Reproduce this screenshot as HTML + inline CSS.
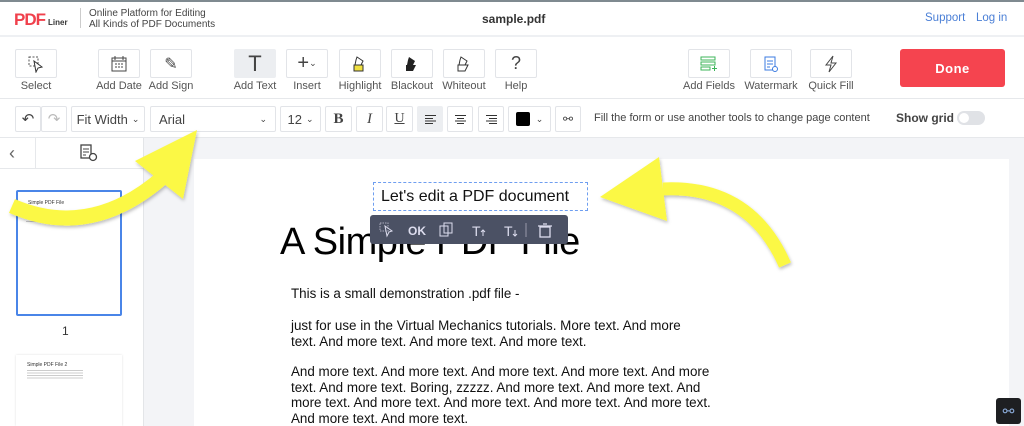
<!DOCTYPE html>
<html><head><meta charset="utf-8"><style>
*{margin:0;padding:0;box-sizing:border-box}
body{width:1024px;height:426px;overflow:hidden;background:#fff;font-family:"Liberation Sans",sans-serif;position:relative;color:#333}
.a{position:absolute}
.btn{position:absolute;border:1px solid #e2e4e8;border-radius:2px;background:#fff;height:29px;top:49px;width:42px;display:flex;align-items:center;justify-content:center}
.lbl{position:absolute;top:80px;font-size:11px;color:#555;text-align:center;width:70px}
.fb{position:absolute;top:106px;height:26px;border:1px solid #e2e4e8;border-radius:2px;background:#fff;display:flex;align-items:center;justify-content:center;font-size:13px;color:#444}
.body{font-family:"Liberation Sans",sans-serif;font-size:13.4px;color:#111;line-height:15.5px}
</style></head><body>
<div class="a" style="left:0;top:0;width:1024px;height:2px;background:#7f8a90"></div>
<div class="a" style="left:14px;top:10px;font-weight:bold;font-size:17px;color:#f0404c;letter-spacing:-1px">PDF<span style="font-size:8px;color:#333;letter-spacing:0;margin-left:3px">Liner</span></div>
<div class="a" style="left:80px;top:8px;width:1px;height:20px;background:#ccc"></div>
<div class="a" style="left:89px;top:8px;font-size:10px;line-height:11px;color:#444">Online Platform for Editing<br>All Kinds of PDF Documents</div>
<div class="a" style="left:482px;top:12px;font-size:12px;font-weight:bold;color:#333">sample.pdf</div>
<div class="a" style="left:925px;top:12px;font-size:11.5px;color:#4a7fd6">Support</div>
<div class="a" style="left:976px;top:12px;font-size:11.5px;color:#4a7fd6">Log in</div>
<div class="a" style="left:0;top:35px;width:1024px;height:2px;background:#eef0f3"></div>
<div class="btn" style="left:15px"><svg width="18" height="18" viewBox="0 0 18 18"><rect x="2" y="2" width="9" height="9" fill="none" stroke="#555" stroke-dasharray="2 1.5"/><path d="M7 6l8 6-4 1-2 4z" fill="#fff" stroke="#333"/></svg></div>
<div class="lbl" style="left:1px">Select</div>
<div class="btn" style="left:98px"><svg width="16" height="16"><rect x="1" y="2" width="14" height="13" fill="none" stroke="#444"/><path d="M1 5h14M4 0v4M12 0v4" stroke="#444"/><path d="M4 8h2M7 8h2M10 8h2M4 11h2M7 11h2M10 11h2" stroke="#444"/></svg></div>
<div class="lbl" style="left:84px">Add Date</div>
<div class="btn" style="left:150px;font-size:16px;color:#444">✎</div>
<div class="lbl" style="left:136px">Add Sign</div>
<div class="btn" style="left:234px;background:#eceef1;border-color:#eceef1;font-size:22px;color:#444">T</div>
<div class="lbl" style="left:220px">Add Text</div>
<div class="btn" style="left:286px;font-size:20px;color:#444">+<span style="font-size:9px">⌄</span></div>
<div class="lbl" style="left:272px">Insert</div>
<div class="btn" style="left:339px"><svg width="14" height="16"><path d="M4 1l6 4-2 4H2l1-5z" fill="#fff" stroke="#333"/><rect x="1" y="9" width="9" height="6" fill="#f0e040" stroke="#333"/></svg></div>
<div class="lbl" style="left:325px">Highlight</div>
<div class="btn" style="left:391px"><svg width="14" height="16"><path d="M4 1l6 4-2 4H2l1-5z" fill="#222"/><path d="M1 9h10l-3 6H1z" fill="#222"/></svg></div>
<div class="lbl" style="left:377px">Blackout</div>
<div class="btn" style="left:443px"><svg width="14" height="16"><path d="M4 1l6 4-2 4H2l1-5z" fill="#fff" stroke="#333"/><path d="M1 9h10l-3 6H1z" fill="#fff" stroke="#333"/></svg></div>
<div class="lbl" style="left:429px">Whiteout</div>
<div class="btn" style="left:495px;font-size:18px;color:#444">?</div>
<div class="lbl" style="left:481px">Help</div>
<div class="btn" style="left:688px"><svg width="18" height="16"><rect x="1" y="1" width="14" height="3" fill="none" stroke="#3cb55a"/><rect x="1" y="6" width="14" height="3" fill="none" stroke="#3cb55a"/><rect x="1" y="11" width="9" height="3" fill="none" stroke="#3cb55a"/><path d="M12 12.5h5M14.5 10v5" stroke="#3cb55a"/></svg></div>
<div class="lbl" style="left:674px">Add Fields</div>
<div class="btn" style="left:750px"><svg width="16" height="16"><rect x="2" y="1" width="10" height="13" fill="none" stroke="#3b7be0"/><path d="M4 5h6M4 8h6M4 11h3" stroke="#3b7be0"/><circle cx="12" cy="13" r="2.5" fill="#fff" stroke="#3b7be0"/></svg></div>
<div class="lbl" style="left:736px">Watermark</div>
<div class="btn" style="left:810px"><svg width="14" height="18"><path d="M9 1L2 10h5l-2 7 7-9H7z" fill="none" stroke="#444"/></svg></div>
<div class="lbl" style="left:796px">Quick Fill</div>
<div class="a" style="left:900px;top:49px;width:105px;height:38px;background:#f5444f;border-radius:3px;color:#fff;font-weight:bold;font-size:13px;display:flex;align-items:center;justify-content:center;letter-spacing:.5px">Done</div>
<div class="a" style="left:0;top:98px;width:1024px;height:1px;background:#e6e8eb"></div>
<div class="fb" style="left:15px;width:26px;font-size:15px">↶</div>
<div class="fb" style="left:41px;width:26px;font-size:15px;color:#bbb">↷</div>
<div class="fb" style="left:71px;width:74px">Fit Width <span style="font-size:9px;margin-left:4px">⌄</span></div>
<div class="fb" style="left:150px;width:126px;justify-content:space-between;padding:0 8px">Arial<span style="font-size:9px">⌄</span></div>
<div class="fb" style="left:280px;width:41px">12 <span style="font-size:9px;margin-left:4px">⌄</span></div>
<div class="fb" style="left:325px;width:27px;font-family:'Liberation Serif';font-weight:bold;font-size:15px">B</div>
<div class="fb" style="left:356px;width:27px;font-family:'Liberation Serif';font-style:italic;font-size:15px">I</div>
<div class="fb" style="left:386px;width:27px;font-family:'Liberation Serif';text-decoration:underline;font-size:14px">U</div>
<div class="fb" style="left:417px;width:26px;background:#eceef1;border-color:#eceef1"><svg width="11" height="9"><path d="M0 .5h11M0 3.5h8M0 6h11M0 8.5h8" stroke="#333"/></svg></div>
<div class="fb" style="left:447px;width:26px"><svg width="11" height="9"><path d="M0 .5h11M2 3.5h7M0 6h11M2 8.5h7" stroke="#333"/></svg></div>
<div class="fb" style="left:478px;width:26px"><svg width="11" height="9"><path d="M0 .5h11M3 3.5h8M0 6h11M3 8.5h8" stroke="#333"/></svg></div>
<div class="fb" style="left:508px;width:43px"><span style="display:inline-block;width:14px;height:14px;background:#000;border-radius:2px;margin-right:6px"></span><span style="font-size:9px">⌄</span></div>
<div class="fb" style="left:555px;width:26px;font-size:12px">⚯</div>
<div class="a" style="left:594px;top:112px;font-size:11px;color:#444">Fill the form or use another tools to change page content</div>
<div class="a" style="left:896px;top:111px;font-size:12px;font-weight:bold;color:#444">Show grid</div>
<div class="a" style="left:957px;top:111px;width:28px;height:14px;border-radius:7px;background:#e0e2e6"><div style="position:absolute;left:2px;top:2px;width:10px;height:10px;border-radius:5px;background:#fff"></div></div>
<div class="a" style="left:0;top:137px;width:1024px;height:1px;background:#e6e8eb"></div>
<div class="a" style="left:143px;top:138px;width:881px;height:288px;background:#f3f4f7"></div>
<div class="a" style="left:143px;top:138px;width:1px;height:288px;background:#e3e5e8"></div>
<div class="a" style="left:0;top:168px;width:143px;height:1px;background:#e6e8eb"></div>
<div class="a" style="left:35px;top:138px;width:1px;height:30px;background:#e6e8eb"></div>
<div class="a" style="left:9px;top:143px;font-size:18px;color:#666">‹</div>
<svg class="a" style="left:80px;top:144px" width="18" height="18"><rect x="1" y="1" width="10" height="13" fill="none" stroke="#444" stroke-width="1.3"/><path d="M3 5h6M3 8h6M3 11h3" stroke="#444"/><circle cx="13" cy="13" r="3.5" fill="#fff" stroke="#444" stroke-width="1.3"/></svg>
<div class="a" style="left:16px;top:190px;width:106px;height:126px;border:2px solid #4a85e8;border-radius:2px;background:#fff"></div>
<div class="a" style="left:28px;top:200px;font-size:5px;color:#333">Simple PDF File</div>
<div class="a" style="left:26px;top:212px;width:60px;height:12px;background:repeating-linear-gradient(#ccc 0 1px,transparent 1px 3px)"></div>
<div class="a" style="left:62px;top:324px;font-size:12px;color:#333">1</div>
<div class="a" style="left:16px;top:355px;width:106px;height:71px;background:#fff;box-shadow:0 0 2px #ddd"></div>
<div class="a" style="left:27px;top:362px;font-size:5px;color:#333">Simple PDF File 2</div>
<div class="a" style="left:27px;top:370px;width:56px;height:9px;background:repeating-linear-gradient(#ccc 0 1px,transparent 1px 2.5px)"></div>
<div class="a" style="left:194px;top:159px;width:815px;height:267px;background:#fff"></div>
<div class="a" style="left:280px;top:221px;font-size:38px;color:#000;letter-spacing:-.5px">A Simple PDF File</div>
<div class="a body" style="left:291px;top:286px">This is a small demonstration .pdf file -</div>
<div class="a body" style="left:291px;top:318px">just for use in the Virtual Mechanics tutorials. More text. And more<br>text. And more text. And more text. And more text.</div>
<div class="a body" style="left:291px;top:364px">And more text. And more text. And more text. And more text. And more<br>text. And more text. Boring, zzzzz. And more text. And more text. And<br>more text. And more text. And more text. And more text. And more text.<br>And more text. And more text.</div>
<div class="a" style="left:373px;top:182px;width:215px;height:29px;border:1.5px dashed #6e9ef0;background:#fff"></div>
<div class="a" style="left:381px;top:188px;font-size:16px;color:#111">Let's edit a PDF document</div>
<div class="a" style="left:370px;top:215px;width:198px;height:29px;background:#4b5164;border-radius:3px;color:#fff"></div>
<svg class="a" style="left:378px;top:220px" width="190" height="20">
<rect x="2" y="3" width="8" height="8" fill="none" stroke="#aab" stroke-dasharray="1.5 1"/><path d="M7 6l7 5-3 1-2 4z" fill="none" stroke="#dde"/>
<text x="30" y="15" font-family="Liberation Sans" font-weight="bold" font-size="12" fill="#dde">OK</text>
<rect x="62" y="6" width="8" height="10" fill="none" stroke="#dde"/><rect x="66" y="3" width="8" height="10" fill="none" stroke="#dde"/>
<text x="94" y="16" font-family="Liberation Sans" font-size="14" fill="#dde">T</text><path d="M105 16v-6M103 12l2-2 2 2" stroke="#dde" fill="none"/>
<text x="126" y="16" font-family="Liberation Sans" font-size="14" fill="#dde">T</text><path d="M137 10v6M135 14l2 2 2-2" stroke="#dde" fill="none"/>
<path d="M148 3v14" stroke="#99a"/>
<rect x="162" y="7" width="10" height="10" fill="none" stroke="#dde" stroke-width="1.3"/><path d="M160 6h14M165 4h4" stroke="#dde" stroke-width="1.3"/>
</svg>
<svg class="a" style="left:0;top:0" width="1024" height="426">
<defs><filter id="s"><feDropShadow dx="1" dy="2" stdDeviation="1.5" flood-color="#000" flood-opacity=".25"/></filter></defs>
<g filter="url(#s)" fill="#fbf844">
<path d="M12 206 Q90 240 162 178" fill="none" stroke="#fbf844" stroke-width="15"/>
<path d="M135 161 L197 130 L183 199 Z"/>
<path d="M663 189 Q750 185 785 265" fill="none" stroke="#fbf844" stroke-width="13"/>
<path d="M600 197 L659 157 L667 221 Z"/>
</g></svg>
<div class="a" style="left:996px;top:398px;width:25px;height:26px;background:#1e1f22;border-radius:3px;color:#8fb0e0;font-size:14px;display:flex;align-items:center;justify-content:center">⚯</div>
</body></html>
